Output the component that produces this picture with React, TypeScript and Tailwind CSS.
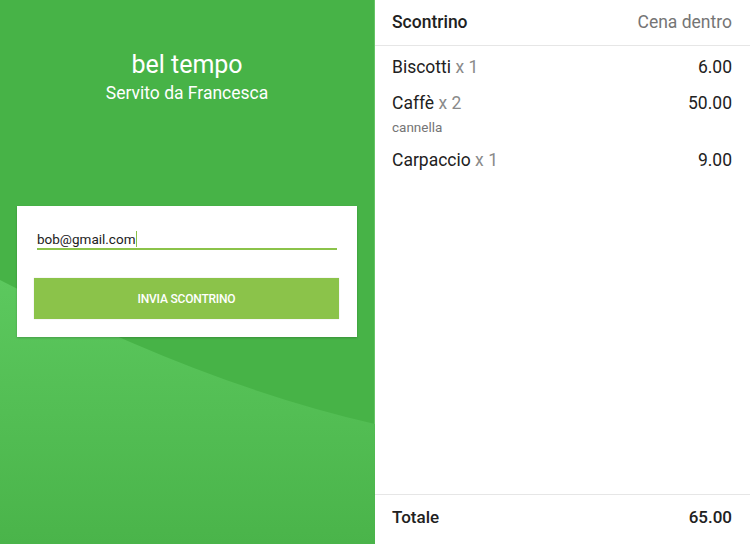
import React from 'react';

const items = [
  { name: 'Biscotti', qty: 1, price: '6.00' },
  { name: 'Caffè', qty: 2, price: '50.00', note: 'cannella' },
  { name: 'Carpaccio', qty: 1, price: '9.00' },
];

const Wave: React.FC = () => (
  <svg className="absolute inset-0" width="375" height="544" viewBox="0 0 375 544">
    <defs>
      <linearGradient id="waveFill" x1="0" y1="0" x2="0" y2="1">
        <stop offset="0" stopColor="#5cc85e" />
        <stop offset="1" stopColor="#4ab44a" />
      </linearGradient>
    </defs>
    <path d="M0 280 Q200 384 375 424 L375 544 L0 544 Z" fill="url(#waveFill)" />
  </svg>
);

export default function App() {
  return (
    <div className="flex w-[750px] h-[544px] overflow-hidden bg-white" style={{ fontFamily: 'Roboto, "Noto Sans", sans-serif' }}>
      {/* left: restaurant + email form */}
      <div className="relative w-[375px] h-full bg-[#47b347] border-r border-[#66c466]">
        <Wave />
        <div className="relative flex flex-col items-center pt-[49px] text-white">
          <div className="text-[25px] leading-[32px]">bel tempo</div>
          <div className="text-[17.5px] leading-[24px]">Servito da Francesca</div>
        </div>
        <div className="relative mt-[101px] ml-[17px] w-[340px] h-[131px] bg-white px-[17px] pt-[24px] shadow-[0_1px_2px_rgba(0,0,0,0.2)]">
          <div className="mx-[3px] h-[20px] border-b-2 border-[#8bc34a] text-[13.5px] leading-[18px] text-[#212121] flex items-start">
            <span>bob@gmail.com</span>
            <span className="ml-[1px] mt-[1px] w-[1px] h-[16px] bg-[#8bc34a]" />
          </div>
          <button className="mt-[28px] w-[305px] h-[41px] bg-[#8bc34a] text-white text-[12px] font-medium tracking-[-0.2px] shadow-[0_0_1px_rgba(0,0,0,0.2)]">
            INVIA SCONTRINO
          </button>
        </div>
      </div>

      {/* right: receipt */}
      <div className="w-[375px] h-full flex flex-col text-[#212121]">
        <div className="h-[46px] flex items-center justify-between pl-[17px] pr-[18px] border-b border-[#e6e6e6] text-[17.5px]">
          <span className="font-medium">Scontrino</span>
          <span className="text-[#757575]">Cena dentro</span>
        </div>
        <div className="flex-1 pt-[9px] pl-[17px] pr-[18px]">
          {items.map((it) => (
            <div key={it.name} className="mb-[12px]">
              <div className="flex justify-between text-[17.5px] leading-[24px]">
                <span>
                  {it.name} <span className="text-[#8a8a8a]">x {it.qty}</span>
                </span>
                <span>{it.price}</span>
              </div>
              {it.note && <div className="mt-[3px] text-[13.5px] leading-[18px] text-[#757575]">{it.note}</div>}
            </div>
          ))}
        </div>
        <div className="h-[50px] border-t border-[#e6e6e6] flex items-start justify-between pt-[10px] pl-[17px] pr-[18px] text-[17px] leading-[24px] font-medium">
          <span>Totale</span>
          <span>65.00</span>
        </div>
      </div>
    </div>
  );
}
